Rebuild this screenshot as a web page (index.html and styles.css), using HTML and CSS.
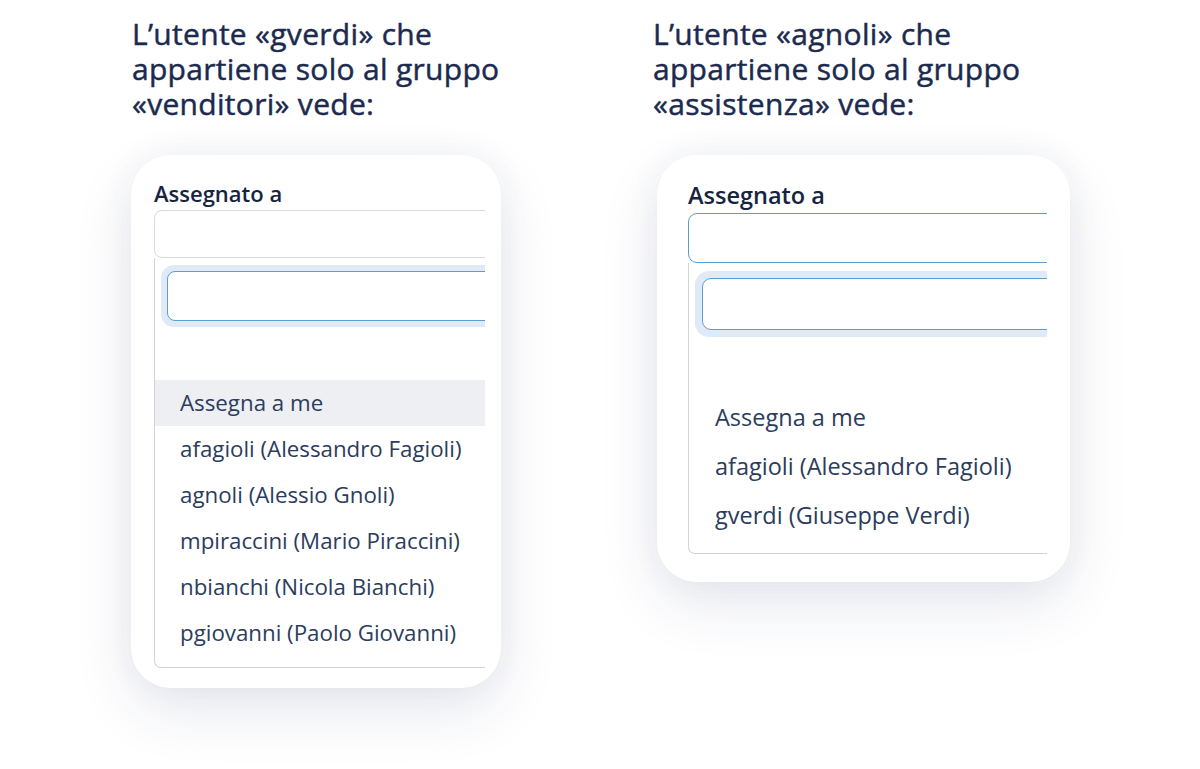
FILE: index.html
```html
<!DOCTYPE html>
<html lang="it">
<head>
  <meta charset="UTF-8">
  <meta name="viewport" content="width=device-width, initial-scale=1.0">
  <title>Assegnato a - visibilità per gruppo</title>
  <link rel="stylesheet" href="styles.css">
</head>
<body>
  <main class="compare">
    <section class="col col_left">
      <h2 class="col-title">L’utente «gverdi» che appartiene solo al gruppo «venditori» vede:</h2>
      <div class="card">
        <label class="field-label">Assegnato a</label>
        <div class="clip">
          <div class="select-box"></div>
          <div class="dropdown">
            <div class="search-ring"><div class="search-input"></div></div>
            <ul class="options">
              <li class="option active">Assegna a me</li>
              <li class="option">afagioli (Alessandro Fagioli)</li>
              <li class="option">agnoli (Alessio Gnoli)</li>
              <li class="option">mpiraccini (Mario Piraccini)</li>
              <li class="option">nbianchi (Nicola Bianchi)</li>
              <li class="option">pgiovanni (Paolo Giovanni)</li>
            </ul>
          </div>
        </div>
      </div>
    </section>

    <section class="col col_right">
      <h2 class="col-title">L’utente «agnoli» che appartiene solo al gruppo «assistenza» vede:</h2>
      <div class="card card_big">
        <label class="field-label">Assegnato a</label>
        <div class="clip">
          <div class="select-box focused"></div>
          <div class="dropdown">
            <div class="search-ring"><div class="search-input"></div></div>
            <ul class="options">
              <li class="option">Assegna a me</li>
              <li class="option">afagioli (Alessandro Fagioli)</li>
              <li class="option">gverdi (Giuseppe Verdi)</li>
            </ul>
          </div>
        </div>
      </div>
    </section>
  </main>
</body>
</html>
```

FILE: styles.css
```css
body {
  margin: 0;
  min-height: 100vh;
  background: #ffffff;
  font-family: "Open Sans", "Noto Sans", sans-serif;
  color: #1b2a4e;
}
.compare {
  display: flex;
  align-items: flex-start;
  gap: 152px;
  padding: 16px 0 80px 131px;
}
.col {
  display: flex;
  flex-direction: column;
}
.col_left {
  width: 370px;
}
.col_right {
  width: 417px;
}
.col-title {
  margin: 0 0 34px 1px;
  font-size: 30px;
  line-height: 35px;
  font-weight: 400;
  letter-spacing: 0.3px;
  -webkit-text-stroke: 0.45px #1b2a4e; /* medium look, no 500 weight installed */
  color: #1b2a4e;
  width: 400px;
}
.col_right .col-title {
  margin-left: 0;
}

/* card with the select */
.card {
  background: #fff;
  border-radius: 40px;
  box-shadow: 0 22px 60px rgba(40, 50, 100, 0.11), 0 0 34px rgba(40, 50, 100, 0.05);
  padding: 25px 16px 20px 23px;
}
.card_big {
  margin-left: 4px;
  padding: 26px 23px 28px 31px;
}
.field-label {
  display: block;
  font-size: 22px;
  line-height: 26px;
  font-weight: 600;
  color: #16243f;
  margin-bottom: 4px;
}
.card_big .field-label {
  font-size: 23.5px;
  line-height: 28px;
}
.clip {
  overflow: hidden;
}
.select-box {
  width: 400px;
  height: 46px;
  border: 1px solid #d8d8df;
  border-radius: 8px;
  background: #fff;
}
.card_big .select-box {
  height: 48px;
  border-radius: 9px;
}
.select-box.focused {
  border-color: #5b9fd2;
}
.dropdown {
  width: 400px;
  border: 1px solid #d2d2da;
  border-top: none;
  border-radius: 0 0 0 7px;
  padding-top: 7px;
  padding-bottom: 11px;
}
.card_big .dropdown {
  padding-top: 8px;
  padding-bottom: 13px;
}
.search-ring {
  margin-left: 6px;
  padding: 6px;
  background: #dfeaf6;
  border-radius: 13px 0 0 13px;
}
.card_big .search-ring {
  padding: 7px;
  border-radius: 14px 0 0 14px;
}
.search-input {
  height: 48px;
  border: 1px solid #5b9fd2;
  border-radius: 8px;
  background: #fff;
}
.card_big .search-input {
  height: 50px;
  border-radius: 9px;
}
.options {
  list-style: none;
  margin: 53px 0 0;
  padding: 0;
  width: 330px;
}
.card_big .options {
  margin-top: 56px;
  width: 360px;
}
.option {
  height: 46px;
  line-height: 46px;
  padding-left: 25px;
  font-size: 22.3px;
  color: #2b3c5d;
  white-space: nowrap;
}
.card_big .option {
  height: 49px;
  line-height: 49px;
  padding-left: 26px;
  font-size: 23.5px;
}
.option.active {
  background: #eeeff2;
}
```
